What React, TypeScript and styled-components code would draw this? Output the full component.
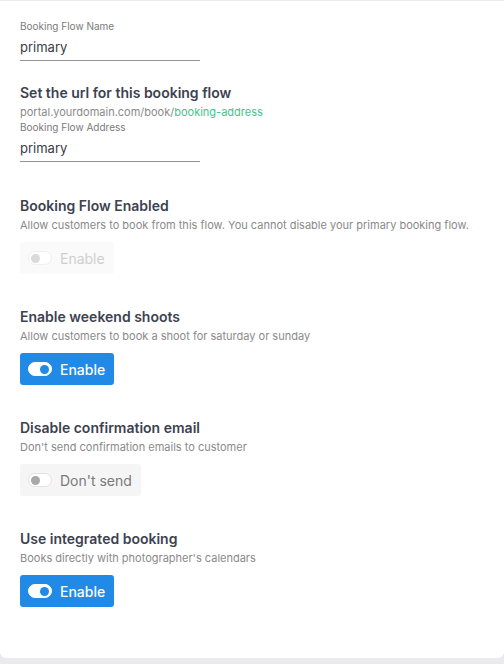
import React from "react";
import styled, { createGlobalStyle } from "styled-components";

const Global = createGlobalStyle`
  html, body { margin: 0; padding: 0; }
  body {
    background: #ebebef;
    font-family: Inter, "Liberation Sans", Arial, sans-serif;
    -webkit-font-smoothing: antialiased;
  }
`;

const Card = styled.div`
  margin-top: 1px;
  height: 657px;
  box-sizing: border-box;
  background: #ffffff;
  border-radius: 0 0 6px 6px;
  padding: 18px 20px 0 20px;
`;

const Field = styled.div`
  display: flex;
  flex-direction: column;
  width: 180px;
`;

const FieldLabel = styled.label`
  font-size: 10px;
  line-height: 14px;
  color: #7a7a7a;
`;

const FieldInput = styled.input`
  font-family: inherit;
  font-size: 13px;
  color: #3a3d45;
  border: none;
  border-bottom: 1px solid #949494;
  outline: none;
  padding: 0;
  height: 27px;
  background: transparent;
`;

const Heading = styled.h3<{ $top?: number }>`
  margin: ${(p) => p.$top ?? 34}px 0 0 0;
  font-size: 14px;
  line-height: 18px;
  font-weight: 600;
  color: #3d4250;
`;

const Desc = styled.p`
  margin: 2px 0 0 0;
  font-size: 11px;
  line-height: 16px;
  color: #8a8a8a;
`;

const Green = styled.span`
  color: #3ec48c;
`;

type Variant = "on" | "off" | "disabled";

const ToggleButton = styled.button<{ $variant: Variant }>`
  margin-top: 9px;
  display: inline-flex;
  align-items: center;
  gap: 8px;
  height: 32px;
  padding: 0 9px 0 8px;
  border: none;
  border-radius: 3px;
  font-family: inherit;
  font-size: 14px;
  font-weight: ${(p) => (p.$variant === "on" ? 500 : 400)};
  cursor: pointer;
  background: ${(p) =>
    p.$variant === "on" ? "#2189e6" : p.$variant === "off" ? "#f5f5f5" : "#fafafa"};
  color: ${(p) =>
    p.$variant === "on" ? "#ffffff" : p.$variant === "off" ? "#7a7a7a" : "#cfcfcf"};
`;

const Track = styled.span<{ $variant: Variant }>`
  box-sizing: border-box;
  width: 24px;
  height: 14px;
  border-radius: 7px;
  background: #ffffff;
  border: 1px solid ${(p) => (p.$variant === "on" ? "#ffffff" : p.$variant === "off" ? "#e2e2e2" : "#efefef")};
  display: flex;
  align-items: center;
  justify-content: ${(p) => (p.$variant === "on" ? "flex-end" : "flex-start")};
  padding: 0 2px;
`;

const Knob = styled.span<{ $variant: Variant }>`
  width: 9px;
  height: 9px;
  border-radius: 50%;
  background: ${(p) =>
    p.$variant === "on" ? "#2189e6" : p.$variant === "off" ? "#a8a8a8" : "#dadada"};
`;

const Row = styled.div`
  display: block;
`;

function Toggle({ variant, label }: { variant: Variant; label: string }) {
  return (
    <Row>
      <ToggleButton $variant={variant} disabled={variant === "disabled"}>
        <Track $variant={variant}>
          <Knob $variant={variant} />
        </Track>
        {label}
      </ToggleButton>
    </Row>
  );
}

export default function App() {
  return (
    <>
      <Global />
      <Card>
        <Field>
          <FieldLabel>Booking Flow Name</FieldLabel>
          <FieldInput defaultValue="primary" />
        </Field>

        <Heading $top={23}>Set the url for this booking flow</Heading>
        <Desc>
          portal.yourdomain.com/book/<Green>booking-address</Green>
        </Desc>
        <Field>
          <FieldLabel>Booking Flow Address</FieldLabel>
          <FieldInput defaultValue="primary" />
        </Field>

        <Heading $top={35}>Booking Flow Enabled</Heading>
        <Desc>Allow customers to book from this flow. You cannot disable your primary booking flow.</Desc>
        <Toggle variant="disabled" label="Enable" />

        <Heading>Enable weekend shoots</Heading>
        <Desc>Allow customers to book a shoot for saturday or sunday</Desc>
        <Toggle variant="on" label="Enable" />

        <Heading>Disable confirmation email</Heading>
        <Desc>Don't send confirmation emails to customer</Desc>
        <Toggle variant="off" label="Don't send" />

        <Heading>Use integrated booking</Heading>
        <Desc>Books directly with photographer's calendars</Desc>
        <Toggle variant="on" label="Enable" />
      </Card>
    </>
  );
}
